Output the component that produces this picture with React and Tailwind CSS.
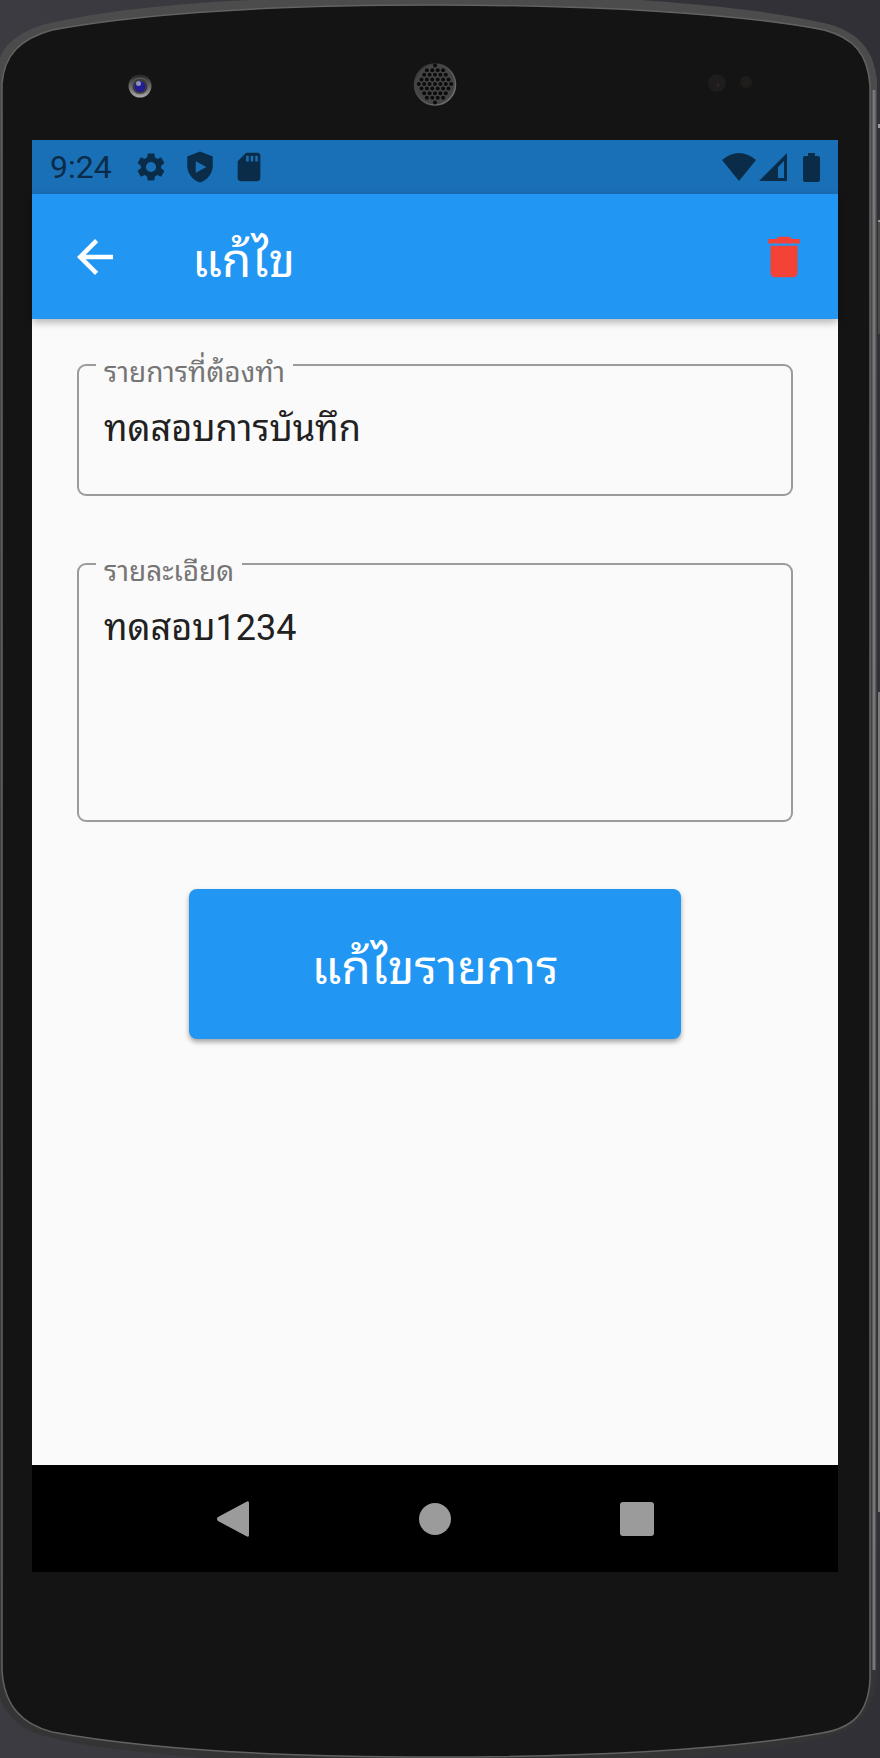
import React from "react";

const FONT =
  "font-['Roboto','Noto_Sans_Thai_Looped','Noto_Looped_Thai','Droid_Sans_Thai','Loma','Garuda','Waree',sans-serif]";

const HOLES = [];
for (let row = -4; row <= 4; row++) {
  for (let col = -4; col <= 4; col++) {
    const x = (col + (row % 2 ? 0.5 : 0)) * 5.4;
    const y = row * 4.6;
    if (Math.hypot(x, y) < 18.5) HOLES.push([435 + x, 84 + y]);
  }
}

function PhoneBody() {
  return (
    <svg viewBox="0 0 880 1758" preserveAspectRatio="none" aria-hidden="true" className="absolute inset-0 h-full w-full">
      <defs>
        <linearGradient id="backdrop" x1="0" x2="1" y1="0" y2="0">
          <stop offset="0" stopColor="#3b3b41" />
          <stop offset="1" stopColor="#303036" />
        </linearGradient>
        <linearGradient id="rim" x1="0" x2="0" y1="0" y2="1">
          <stop offset="0" stopColor="#4c4c4c" />
          <stop offset="1" stopColor="#343434" />
        </linearGradient>
        <linearGradient id="lens" x1="0" x2="0" y1="0" y2="1">
          <stop offset="0" stopColor="#242424" />
          <stop offset="1" stopColor="#a8a8a8" />
        </linearGradient>
        <linearGradient id="grille" x1="0" x2="1" y1="0" y2="1">
          <stop offset="0" stopColor="#2c2c2c" />
          <stop offset="1" stopColor="#7c7c7c" />
        </linearGradient>
      </defs>
      <rect width="880" height="1758" fill="url(#backdrop)" />
      <path d="M878 222h2v112h-2z" fill="#4a4946" />
      <path d="M878 220h2v2h-2zM878 124h2v4h-2z" fill="#9a9a9a" />
      <path d="M878 692h2v820h-2z" fill="#7b7b7b" />
      <path
        d="M0 58C6 42 22 30 50 23C110 10 180 3 254 0H640C730 6 790 15 828 24C858 32 874 50 877 80V1670C876 1705 862 1727 830 1736C780 1749 720 1755 665 1758H205C150 1753 90 1748 48 1737C22 1731 6 1716 0 1698Z"
        fill="url(#rim)"
      />
      <path
        d="M2 84C4 55 20 39 52 30C150 12 290 5 435 5C600 5 740 14 824 30C854 38 868 54 870 86V1680C868 1714 852 1728 822 1733C720 1751 580 1757 435 1757C290 1757 150 1750 52 1732C22 1724 4 1706 2 1670Z"
        fill="#141414"
        stroke="#626262"
        strokeWidth="1.5"
      />
      <path d="M874 90V1670" stroke="#77777b" strokeWidth="3" />
      <circle cx="140" cy="86" r="11.5" fill="url(#lens)" />
      <circle cx="140" cy="86" r="8" fill="#3c3c3c" stroke="#626262" strokeWidth="1" />
      <circle cx="140" cy="86.5" r="5.5" fill="#211c91" />
      <circle cx="138.5" cy="83.5" r="2.5" fill="#8c93b4" />
      <circle cx="435" cy="84.5" r="20.5" fill="#444444" stroke="url(#grille)" strokeWidth="1.5" />
      {HOLES.map(([x, y], i) => (
        <circle key={i} cx={x} cy={y} r="2" fill="#0c0c0c" />
      ))}
      <circle cx="717" cy="83" r="9" fill="#1e1c1c" />
      <circle cx="718" cy="85" r="1.5" fill="#3d2424" />
      <circle cx="746" cy="82" r="6" fill="#1f1d1b" />
    </svg>
  );
}

function Icon({ d, className }) {
  return (
    <svg viewBox="0 0 24 24" fill="currentColor" fillRule="evenodd" aria-hidden="true" className={className}>
      <path d={d} />
    </svg>
  );
}

const GEAR =
  "M19.14 12.94c.04-.3.06-.61.06-.94s-.02-.64-.07-.94l2.03-1.58c.18-.14.23-.41.12-.61l-1.92-3.32c-.12-.22-.37-.29-.59-.22l-2.39.96c-.5-.38-1.03-.7-1.62-.94L14.4 2.81c-.04-.24-.24-.41-.48-.41h-3.84c-.24 0-.43.17-.47.41L9.25 5.35c-.59.24-1.13.57-1.62.94l-2.39-.96c-.22-.08-.47 0-.59.22L2.74 8.87c-.12.21-.08.47.12.61l2.03 1.58c-.05.3-.09.63-.09.94s.02.64.07.94l-2.03 1.58c-.18.14-.23.41-.12.61l1.92 3.32c.12.22.37.29.59.22l2.39-.96c.5.38 1.03.7 1.62.94l.36 2.54c.05.24.24.41.48.41h3.84c.24 0 .44-.17.47-.41l.36-2.54c.59-.24 1.13-.56 1.62-.94l2.39.96c.22.08.47 0 .59-.22l1.92-3.32c.12-.22.07-.47-.12-.61l-2.01-1.58zM12 15.6A3.6 3.6 0 1 1 12 8.4a3.6 3.6 0 0 1 0 7.2z";
const SHIELD = "M12 1 3 4.5V11c0 5.5 3.8 10.4 9 12 5.2-1.6 9-6.5 9-12V4.5zM9 8l7.5 4L9 16z";
const SD_CARD = "M18 2h-8L4 8v12c0 1.1.9 2 2 2h12c1.1 0 2-.9 2-2V4c0-1.1-.9-2-2-2zM10 4h1.8v4.2H10zM13.2 4H15v4.2h-1.800zM16.4 4h1.800v4.200h-1.800z";
const BACK = "M20 11H7.83l5.59-5.59L12 4l-8 8 8 8 1.41-1.41L7.83 13H20z";
const TRASH = "M6 19c0 1.1.9 2 2 2h8c1.1 0 2-.9 2-2V7H6zM19 4h-3.5l-1-1h-5l-1 1H5v2h14z";

function StatusBar() {
  return (
    <div className="flex h-[54px] items-center bg-[#1a70b7] px-[18px] text-[#0a2c48]">
      <span className="text-[32px] leading-none">9:24</span>
      <Icon d={GEAR} className="ml-[22px] size-[34px]" />
      <Icon d={SHIELD} className="ml-[15px] size-[34px]" />
      <Icon d={SD_CARD} className="ml-[15px] size-[34px]" />
      <svg viewBox="0 0 34 28" fill="currentColor" aria-hidden="true" className="ml-auto h-7 w-[34px]">
        <path d="M0 7Q17-7 34 7L17 28Z" />
      </svg>
      <svg viewBox="0 0 28 28" fill="currentColor" fillRule="evenodd" aria-hidden="true" className="ml-[3px] size-7">
        <path d="M28 0V28H0ZM25 8 19 14V25H25Z" />
      </svg>
      <svg viewBox="0 0 17 29" fill="currentColor" aria-hidden="true" className="ml-4 h-[29px] w-[17px]">
        <path d="M5 0H12V3H15Q17 3 17 5V27Q17 29 15 29H2Q0 29 0 27V5Q0 3 2 3H5Z" />
      </svg>
    </div>
  );
}

function OutlinedField({ id, label, value, rows, className }) {
  return (
    <fieldset className={"min-w-0 rounded-[9px] border-2 border-[#9b9b9b] px-[17px] " + className}>
      <legend className="h-0 px-2">
        <label htmlFor={id} className="block text-[28px] leading-4 text-[#757575]">
          {label}
        </label>
      </legend>
      <textarea
        id={id}
        rows={rows}
        defaultValue={value}
        className="mt-9 block w-full resize-none overflow-hidden bg-transparent px-2 text-[36px] leading-[54px] text-[#212121] outline-none"
      />
    </fieldset>
  );
}

export default function App() {
  return (
    <div className={"relative min-h-screen w-full pb-[186px] pl-8 pr-[42px] pt-[140px] " + FONT}>
      <PhoneBody />
      <div className="relative flex min-h-[1432px] flex-col bg-[#fafafa]">
        <StatusBar />
        <header className="flex h-[125px] items-center bg-[#2196f3] pl-9 pr-[27px] text-white shadow-[0_3px_8px_rgba(0,0,0,0.3)]">
          <button type="button" aria-label="ย้อนกลับ">
            <Icon d={BACK} className="size-[54px]" />
          </button>
          <h1 className="ml-[70px] pt-2 text-[48px] leading-[60px]">แก้ไข</h1>
          <button type="button" aria-label="ลบ" className="ml-auto text-[#f44336]">
            <Icon d={TRASH} className="size-[54px]" />
          </button>
        </header>
        <main className="flex flex-1 flex-col px-[45px] pt-[45px]">
          <OutlinedField id="todo" label="รายการที่ต้องทำ" value="ทดสอบการบันทึก" rows={1} className="h-[132px]" />
          <OutlinedField id="detail" label="รายละเอียด" value="ทดสอบ1234" rows={3} className="mt-[67px] h-[259px]" />
          <button
            type="button"
            className="mt-[67px] h-[150px] w-[492px] max-w-full self-center rounded-lg bg-[#2196f3] pt-2 text-[48px] leading-[60px] text-white shadow-[0_3px_5px_rgba(0,0,0,0.35)]"
          >
            แก้ไขรายการ
          </button>
        </main>
        <nav className="grid h-[107px] grid-cols-3 items-center bg-black px-[100px] text-[#9b9b9b]">
          <button type="button" aria-label="Back" className="justify-self-center">
            <svg viewBox="0 0 32 36" fill="currentColor" className="h-9 w-8">
              <path d="M29 1Q32-1 32 2V34Q32 37 29 35L1 20Q-1 18 1 16Z" />
            </svg>
          </button>
          <button type="button" aria-label="Home" className="size-8 justify-self-center rounded-full bg-[#9b9b9b]" />
          <button type="button" aria-label="Recents" className="size-[34px] justify-self-center rounded-[3px] bg-[#9b9b9b]" />
        </nav>
      </div>
    </div>
  );
}
